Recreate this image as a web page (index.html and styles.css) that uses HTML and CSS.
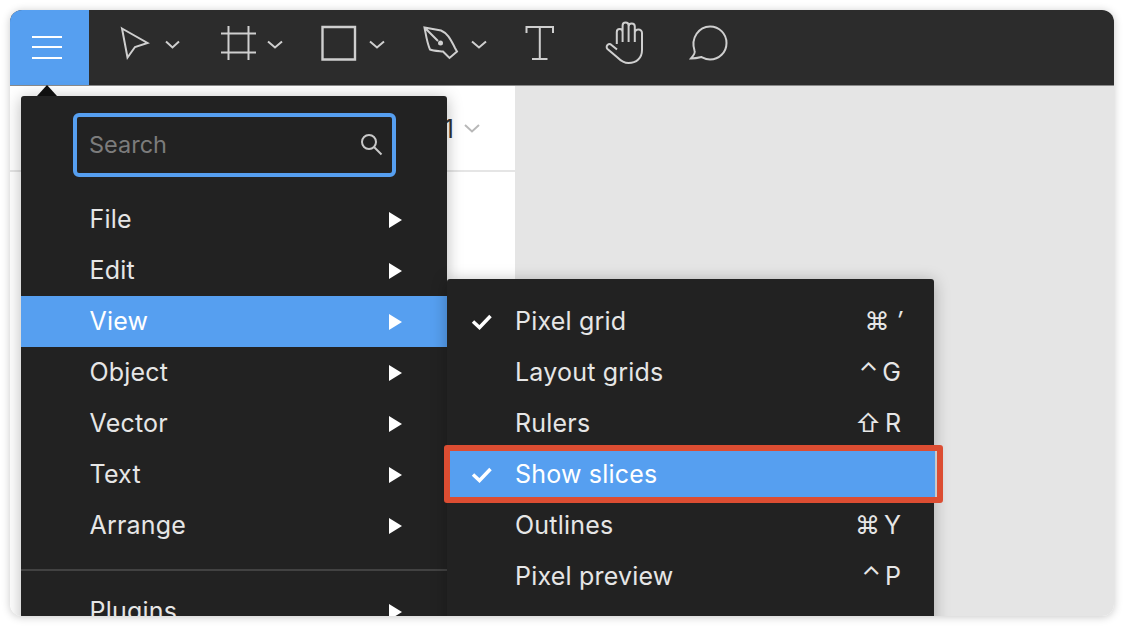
FILE: index.html
```html
<!DOCTYPE html>
<html lang="en">
<head>
<meta charset="utf-8">
<title>View menu</title>
<link rel="stylesheet" href="styles.css">
</head>
<body>
<div class="window">
  <header class="toolbar">
    <button class="menu-btn" aria-label="Menu">
      <span class="bar"></span><span class="bar"></span><span class="bar"></span>
    </button>
    <svg class="tool" width="112" height="75" viewBox="89 10 112 75"><path d="M122 28.5 147.5 43 135 47 127.5 57.5Z"/><path d="M166 41.5 172.5 47.500 179 41.500"/></svg>
    <svg class="tool" width="100" height="75" viewBox="201 10 100 75"><path d="M228.500 26V60M248.500 26V60M221 33.500H256M221 52.500H256"/><path d="M268 41.500 275 47.500 282 41.500"/></svg>
    <svg class="tool" width="100" height="75" viewBox="301 10 100 75"><path class="thick" d="M322.500 27H355V59.500H322.500Z"/><path d="M370 41.500 377 47.500 384 41.500"/></svg>
    <svg class="tool" width="106" height="75" viewBox="401 10 106 75"><path d="M424.500 27.500 441 30.500C447 33 450 38 455 48L457 51.500 449.500 58 444.500 53 443 51.500C437 51 433 51 430 49.500 427 43 426 35 424.500 27.500ZM424.500 27.500 438 41"/><circle class="dot" cx="440.500" cy="43" r="2.500"/><path d="M472 41.500 479 47.500 486 41.500"/></svg>
    <svg class="tool" width="81" height="75" viewBox="507 10 81 75"><path d="M526.500 33V27H553V33M539.800 27V59M532 59H547.500"/></svg>
    <svg class="tool" width="80" height="75" viewBox="588 10 80 75"><path d="M616.800 44V32A2.900 2.900 0 0 1 622.600 32V42M622.600 32V25.500A3 3 0 0 1 628.600 25.500V42M628.600 26.500A3 3 0 0 1 634.800 26.500V42M634.800 33A3.400 3.400 0 0 1 642 33V50C642 58 636.500 63 628.500 63 623.500 63 620.500 60.500 617.500 57.500L607.500 49A2.800 2.800 0 0 1 611.500 45L617 49.500"/></svg>
    <svg class="tool" width="82" height="75" viewBox="668 10 82 75"><path d="M691 58.500C694 55 695.500 52.500 694.500 50.500 690.500 38 699 26.500 710 26.500 719.500 26.500 726.500 34 726.500 43 726.500 52.500 719 59.500 710 59.500 706 59.500 703.500 58 701.500 57 697.500 58 694.500 58.500 691 58.500Z"/></svg>
  </header>
  <div class="stage">
    <aside class="panel">
      <div class="panel-head">
        <span class="page-name">1</span>
        <svg class="page-caret" width="16" height="9" viewBox="0 0 16 9"><path d="M1 1 8 7.500 15 1"/></svg>
      </div>
    </aside>
    <main class="canvas"></main>
  </div>

  <span class="menu-tip"></span>
  <nav class="menu main-menu">
    <div class="search">
      <span class="search-text">Search</span>
      <svg class="search-icon" width="24" height="24" viewBox="0 0 24 24"><circle cx="10" cy="10" r="7"/><path d="M15 15 22.500 22.500"/></svg>
    </div>
    <div class="row"><span>File</span><i class="arrow"></i></div>
    <div class="row"><span>Edit</span><i class="arrow"></i></div>
    <div class="row active"><span>View</span><i class="arrow"></i></div>
    <div class="row"><span>Object</span><i class="arrow"></i></div>
    <div class="row"><span>Vector</span><i class="arrow"></i></div>
    <div class="row"><span>Text</span><i class="arrow"></i></div>
    <div class="row"><span>Arrange</span><i class="arrow"></i></div>
    <hr class="divider">
    <div class="row"><span>Plugins</span><i class="arrow"></i></div>
  </nav>

  <nav class="menu sub-menu">
    <div class="sub-row">
      <svg class="check" width="22" height="16" viewBox="0 0 22 16"><path d="M2 7.500 8.500 13.500 19.500 2"/></svg>
      <span class="label">Pixel grid</span><span class="keys"><span class="mod">⌘</span><span class="prime">′</span></span>
    </div>
    <div class="sub-row"><span class="check"></span><span class="label">Layout grids</span><span class="keys"><span class="mod">⌃</span>G</span></div>
    <div class="sub-row"><span class="check"></span><span class="label">Rulers</span><span class="keys"><span class="mod">⇧</span>R</span></div>
    <div class="sub-row active">
      <svg class="check" width="22" height="16" viewBox="0 0 22 16"><path d="M2 7.500 8.500 13.500 19.500 2"/></svg>
      <span class="label">Show slices</span>
    </div>
    <div class="sub-row"><span class="check"></span><span class="label">Outlines</span><span class="keys"><span class="mod">⌘</span>Y</span></div>
    <div class="sub-row"><span class="check"></span><span class="label">Pixel preview</span><span class="keys"><span class="mod">⌃</span>P</span></div>
  </nav>
  <div class="callout"></div>
</div>
</body>
</html>
```
FILE: styles.css
```css
* { box-sizing: border-box; }
html, body { height: 100%; }
body {
  margin: 0;
  padding: 10px;
  overflow: hidden;
  background: #fff;
  font-family: Inter, "Liberation Sans", "DejaVu Sans", sans-serif;
}
.window {
  position: relative;
  height: 606px;
  border-radius: 12px;
  overflow: hidden;
  display: flex;
  flex-direction: column;
  box-shadow: 0 1px 8px rgba(0, 0, 0, .22);
}
.toolbar {
  flex: none;
  height: 75px;
  display: flex;
  background: #2c2c2c;
}
.menu-btn {
  flex: none;
  width: 79px;
  padding: 0 5px 1px 0;
  border: 0;
  background: #569ff0;
  display: flex;
  flex-direction: column;
  align-items: center;
  justify-content: center;
  gap: 8.500px;
}
.bar { width: 30px; height: 2px; background: #fff; }
.tool { flex: none; display: block; fill: none; stroke: #cfcfcf; stroke-width: 2; }
.tool .thick { stroke-width: 2.400; }
.tool .dot { fill: #cfcfcf; stroke: none; }
.stage { flex: 1; display: flex; min-height: 0; border-top: 1px solid #8a8a8a; }
.panel { flex: none; width: 505px; background: #fff; }
.panel-head {
  height: 86px;
  display: flex;
  align-items: center;
  justify-content: flex-end;
  gap: 10px;
  padding: 1px 35px 0 0;
  border-bottom: 2px solid #e5e5e5;
  color: #333;
  font-size: 25px;
}
.page-caret { fill: none; stroke: #b8b8b8; stroke-width: 2; }
.canvas { flex: 1; background: #e5e5e5; }
.menu {
  position: absolute;
  background: #222;
  border-radius: 3px;
  box-shadow: 0 2px 16px rgba(0, 0, 0, .28);
  color: #e6e6e6;
  font-size: 25px;
  letter-spacing: .2px;
}
.menu-tip {
  position: absolute;
  left: 27px;
  top: 75px;
  border-left: 10px solid transparent;
  border-right: 10px solid transparent;
  border-bottom: 11px solid #111;
}
.main-menu { left: 11px; top: 86px; width: 426px; padding-top: 17px; }
.search {
  margin: 0 51px 17px 52px;
  height: 64px;
  padding: 0 9px 2px 12px;
  display: flex;
  align-items: center;
  justify-content: space-between;
  border: 4px solid #569ff0;
  border-radius: 6px;
}
.search-text { color: #7c7c7c; font-size: 23.500px; letter-spacing: 0; }
.search-icon { fill: none; stroke: #c8c8c8; stroke-width: 2; }
.row {
  height: 51px;
  padding: 0 45px 2px 69px;
  display: flex;
  align-items: center;
  justify-content: space-between;
}
.row span { margin-left: -.5px; }
.row.active { background: #569ff0; color: #fff; }
.arrow {
  position: relative;
  top: 1px;
  border-left: 13px solid #fff;
  border-top: 8px solid transparent;
  border-bottom: 8px solid transparent;
}
.divider {
  height: 2px;
  margin: 18px 0 15px;
  border: 0;
  background: #424242;
}
.sub-menu { left: 437px; top: 269px; width: 487px; height: 400px; padding-top: 17px; }
.sub-row {
  height: 51px;
  padding: 0 33px 2px 24px;
  display: flex;
  align-items: center;
}
.sub-row.active { background: #569ff0; color: #fff; box-shadow: 1px 0 0 #569ff0; }
.check {
  flex: none;
  width: 22px;
  margin: 2px 22px 0 0;
  fill: none;
  stroke: #fff;
  stroke-width: 3.500;
}
.label { flex: 1; }
.keys { display: flex; align-items: baseline; letter-spacing: 0; }
.mod { margin-right: 4px; }
.prime { font-style: italic; margin: 0 -1px 0 3px; }
.callout {
  position: absolute;
  left: 434px;
  top: 435px;
  width: 499px;
  height: 58px;
  border: 6px solid #dc4d32;
  border-radius: 3px;
}
```
